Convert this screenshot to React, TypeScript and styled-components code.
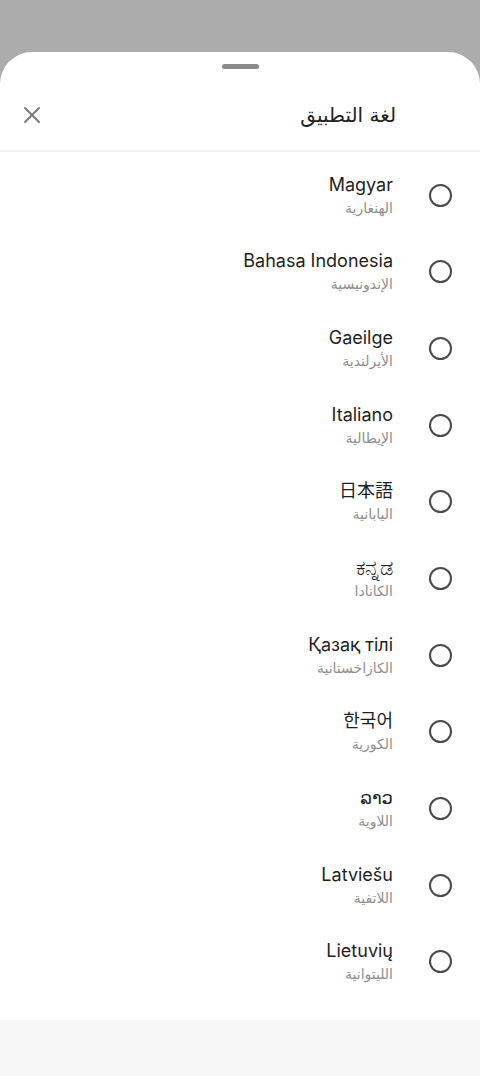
import React from 'react';
import styled, { createGlobalStyle } from 'styled-components';

interface Language {
  code: string;
  name: string;
  arabic: string;
  large?: boolean;
}

const LANGUAGES: Language[] = [
  { code: 'hu', name: 'Magyar', arabic: 'الهنغارية' },
  { code: 'id', name: 'Bahasa Indonesia', arabic: 'الإندونيسية' },
  { code: 'ga', name: 'Gaeilge', arabic: 'الأيرلندية' },
  { code: 'it', name: 'Italiano', arabic: 'الإيطالية' },
  { code: 'ja', name: '日本語', arabic: 'اليابانية' },
  { code: 'kn', name: 'ಕನ್ನಡ', arabic: 'الكانادا', large: true },
  { code: 'kk', name: 'Қазақ тілі', arabic: 'الكازاخستانية' },
  { code: 'ko', name: '한국어', arabic: 'الكورية' },
  { code: 'lo', name: 'ລາວ', arabic: 'اللاوية' },
  { code: 'lv', name: 'Latviešu', arabic: 'اللاتفية' },
  { code: 'lt', name: 'Lietuvių', arabic: 'الليتوانية' },
];

const GlobalStyle = createGlobalStyle`
  html, body {
    margin: 0;
    padding: 0;
    background: #acacac;
  }
  body {
    font-family: Inter, "Noto Sans", "DejaVu Sans", "Noto Sans CJK JP", sans-serif;
  }
`;

const Screen = styled.div`
  display: flex;
  flex-direction: column;
  height: 1076px;
  padding-top: 52px;
  box-sizing: border-box;
`;

const Sheet = styled.div`
  flex: 1;
  display: flex;
  flex-direction: column;
  background: #ffffff;
  border-radius: 32px 32px 0 0;
  overflow: hidden;
  direction: rtl;
`;

const HandleWrap = styled.div`
  display: flex;
  justify-content: center;
  padding-top: 12px;
`;

const Handle = styled.div`
  width: 37px;
  height: 5px;
  border-radius: 3px;
  background: #8a8a8a;
`;

const Header = styled.div`
  display: flex;
  align-items: center;
  justify-content: space-between;
  height: 69px;
  padding: 12px 84px 0 18px;
  border-bottom: 2px solid #f2f2f2;
`;

const Title = styled.h1`
  margin: 0;
  font-family: "DejaVu Sans", "Noto Sans", sans-serif;
  font-size: 20px;
  font-weight: 400;
  color: #222222;
`;

const CloseButton = styled.button`
  display: flex;
  align-items: center;
  justify-content: center;
  width: 28px;
  height: 28px;
  padding: 0;
  border: none;
  background: none;
  cursor: pointer;
`;

const List = styled.ul`
  list-style: none;
  margin: 0;
  padding: 5px 0 20px;
`;

const Row = styled.li`
  display: flex;
  align-items: center;
  height: 76.7px;
  padding-right: 28px;
  gap: 36px;
`;

const Radio = styled.span<{ $checked?: boolean }>`
  width: 19px;
  height: 19px;
  border-radius: 50%;
  border: 2px solid #4a4a4a;
  flex-shrink: 0;
  background: ${(p) => (p.$checked ? '#4a4a4a' : 'transparent')};
`;

const Labels = styled.div`
  display: flex;
  flex-direction: column;
  align-items: flex-start;
  gap: 1px;
`;

const NativeName = styled.span<{ $large?: boolean }>`
  direction: ltr;
  font-size: ${(p) => (p.$large ? '21px' : '18px')};
  line-height: 24px;
  color: #1f1f1f;
`;

const ArabicName = styled.span`
  font-family: "DejaVu Sans", "Noto Sans", sans-serif;
  font-size: 14px;
  line-height: 20px;
  color: #8f8f8f;
`;

const Footer = styled.div`
  height: 56px;
  background: #f7f7f7;
`;

const CloseIcon = () => (
  <svg width="18" height="18" viewBox="0 0 18 18" fill="none">
    <path d="M2 2L16 16M16 2L2 16" stroke="#7a7a7a" strokeWidth="2" strokeLinecap="round" />
  </svg>
);

const App: React.FC = () => {
  return (
    <>
      <GlobalStyle />
      <Screen>
        <Sheet>
          <HandleWrap>
            <Handle />
          </HandleWrap>
          <Header>
            <Title>لغة التطبيق</Title>
            <CloseButton aria-label="close">
              <CloseIcon />
            </CloseButton>
          </Header>
          <List>
            {LANGUAGES.map((lang) => (
              <Row key={lang.code}>
                <Radio />
                <Labels>
                  <NativeName $large={lang.large}>{lang.name}</NativeName>
                  <ArabicName>{lang.arabic}</ArabicName>
                </Labels>
              </Row>
            ))}
          </List>
          <Footer />
        </Sheet>
      </Screen>
    </>
  );
};

export default App;
